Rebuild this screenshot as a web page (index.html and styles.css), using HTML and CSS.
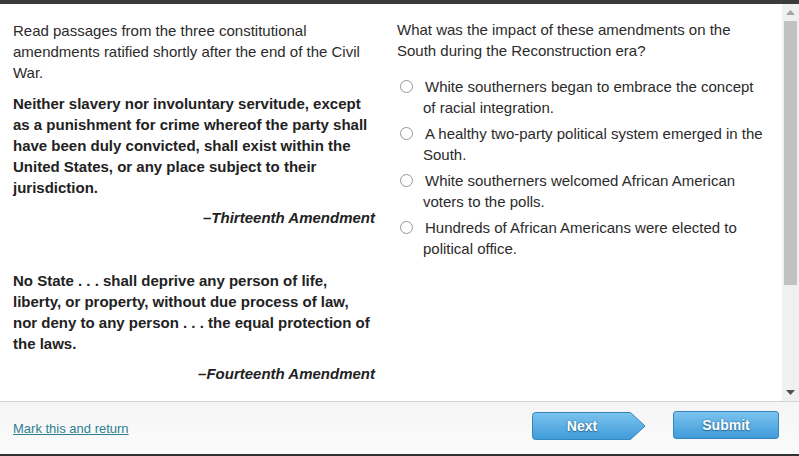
FILE: index.html
```html
<!DOCTYPE html>
<html>
<head>
<meta charset="utf-8">
<link rel="stylesheet" href="styles.css">
</head>
<body>
<div class="topbar"></div>
<div class="viewport">
  <div class="content">
    <div class="col-left">
      <p class="intro">Read passages from the three constitutional amendments ratified shortly after the end of the Civil War.</p>
      <p class="quote">Neither slavery nor involuntary servitude, except as a punishment for crime whereof the party shall have been duly convicted, shall exist within the United States, or any place subject to their jurisdiction.</p>
      <p class="cite">–Thirteenth Amendment</p>
      <p class="quote second">No State . . . shall deprive any person of life, liberty, or property, without due process of law, nor deny to any person . . . the equal protection of the laws.</p>
      <p class="cite">–Fourteenth Amendment</p>
    </div>
    <div class="col-right">
      <p class="question">What was the impact of these amendments on the South during the Reconstruction era?</p>
      <div class="options">
        <label class="option"><span class="radio"></span>White southerners began to embrace the concept of racial integration.</label>
        <label class="option"><span class="radio"></span>A healthy two-party political system emerged in the South.</label>
        <label class="option"><span class="radio"></span>White southerners welcomed African American voters to the polls.</label>
        <label class="option"><span class="radio"></span>Hundreds of African Americans were elected to political office.</label>
      </div>
    </div>
  </div>
  <div class="scrollbar">
    <div class="sb-btn"><svg width="9" height="5" viewBox="0 0 9 5"><polygon points="0,5 9,5 4.5,0" fill="#a3a3a3"/></svg></div>
    <div class="sb-track"><div class="sb-thumb"></div></div>
    <div class="sb-btn"><svg width="9" height="5" viewBox="0 0 9 5"><polygon points="0,0 9,0 4.5,5" fill="#505050"/></svg></div>
  </div>
</div>
<div class="footer">
  <a class="mark" href="#">Mark this and return</a>
  <div class="buttons">
    <button class="btn next">
      <svg class="btn-shape" width="114" height="28" viewBox="0 0 114 28">
        <defs>
          <linearGradient id="gn" x1="0" y1="0" x2="0" y2="1">
            <stop offset="0" stop-color="#7cc3ef"/>
            <stop offset="1" stop-color="#3f9bd8"/>
          </linearGradient>
        </defs>
        <path d="M3.5,0.5 H98.5 L113,14 L98.5,27.5 H3.5 Q0.5,27.5 0.5,24.5 V3.5 Q0.5,0.5 3.5,0.5 Z" fill="url(#gn)" stroke="#3486bd"/>
      </svg>
      <span class="btn-label">Next</span>
    </button>
    <button class="btn submit"><span class="btn-label">Submit</span></button>
  </div>
</div>
<div class="bottombar"></div>
</body>
</html>
```

FILE: styles.css
```css
html, body {
  margin: 0;
  padding: 0;
  background: #ffffff;
}
body {
  width: 799px;
  height: 456px;
  overflow: hidden;
  font-family: Arial, "Liberation Sans", sans-serif;
  color: #2b2b2b;
}
.topbar {
  height: 4px;
  background: #3b3b3b;
}
.viewport {
  height: 397px;
  display: flex;
}
.content {
  flex: 1;
  display: grid;
  grid-template-columns: 362px 370px;
  column-gap: 22px;
  padding: 9px 0 0 13px;
  font-size: 15px;
  line-height: 21px;
}
p {
  margin: 0;
}
.intro {
  margin-top: 7px;
}
.quote {
  font-weight: bold;
  margin-top: 10px;
  padding-right: 3px;
  color: #222;
}
.quote.second {
  margin-top: 42px;
}
.cite {
  font-weight: bold;
  font-style: italic;
  text-align: right;
  margin-top: 9px;
  color: #222;
}
.question {
  margin-top: 6px;
}
.options {
  margin-top: 15px;
  display: flex;
  flex-direction: column;
  gap: 5px;
}
.option {
  display: block;
  padding-left: 26px;
  text-indent: -23px;
}
.radio {
  display: inline-block;
  box-sizing: border-box;
  width: 13px;
  height: 13px;
  border: 1px solid #969696;
  border-radius: 50%;
  background: #fff;
  margin-right: 12px;
  vertical-align: -1px;
  text-indent: 0;
}
.scrollbar {
  width: 17px;
  background: #f0f0f0;
  display: flex;
  flex-direction: column;
}
.sb-btn {
  height: 17px;
  display: flex;
  align-items: center;
  justify-content: center;
}
.sb-track {
  flex: 1;
  padding: 0 2px;
}
.sb-thumb {
  height: 264px;
  background: #c1c1c1;
}
.footer {
  height: 52px;
  border-top: 1px solid #d4d4d4;
  background: linear-gradient(#f5f5f5, #fbfbfb);
  display: flex;
  align-items: center;
  justify-content: space-between;
  padding: 0 20px 0 13px;
}
.mark {
  font-size: 13px;
  color: #2d7f92;
  text-decoration: underline;
  margin-top: 1px;
}
.buttons {
  align-self: flex-start;
  margin-top: 9px;
  display: flex;
  align-items: flex-start;
  gap: 27px;
}
.btn {
  position: relative;
  border: 0;
  padding: 0;
  margin: 0;
  background: none;
  font-family: Arial, "Liberation Sans", sans-serif;
  font-weight: bold;
  font-size: 14px;
  color: #ffffff;
  text-shadow: 0 0 2px #2a6d9c, 0 1px 1px #2a6d9c;
  display: flex;
  align-items: center;
  justify-content: center;
}
.next {
  width: 114px;
  height: 28px;
  padding-right: 14px;
  box-sizing: border-box;
  margin-top: 1px;
}
.btn-shape {
  position: absolute;
  left: 0;
  top: 0;
}
.btn-label {
  position: relative;
}
.submit {
  width: 106px;
  height: 28px;
  box-sizing: border-box;
  border: 1px solid #3486bd;
  border-radius: 3px;
  background: linear-gradient(#7cc3ef, #3f9bd8);
}
.bottombar {
  height: 2px;
  background: #333;
}
```
